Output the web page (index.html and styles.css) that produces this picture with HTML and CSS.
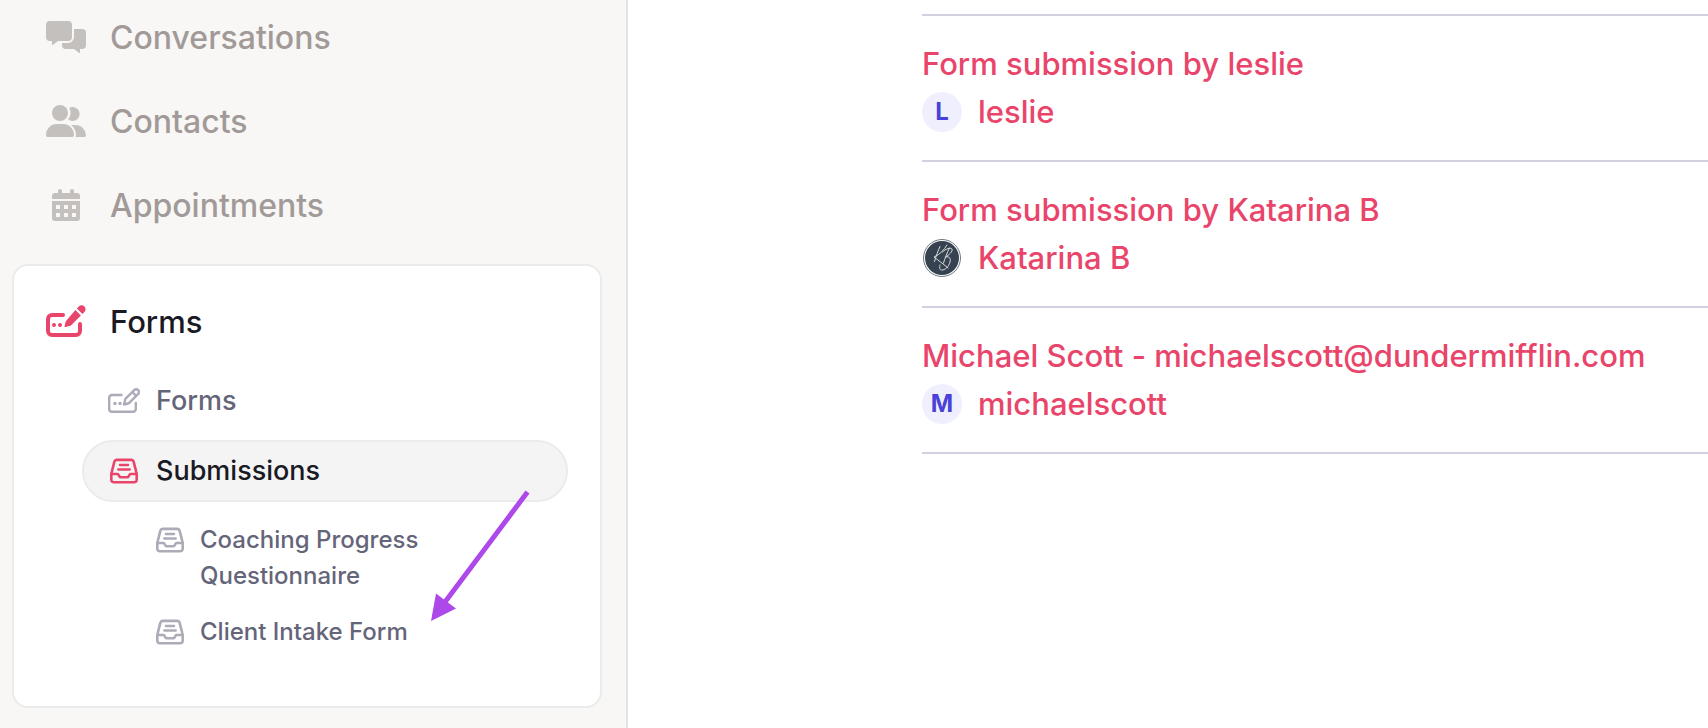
FILE: index.html
```html
<!DOCTYPE html>
<html lang="en">
<head>
<meta charset="utf-8">
<meta name="viewport" content="width=device-width, initial-scale=1">
<title>Submissions</title>
<link rel="stylesheet" href="styles.css">
</head>
<body>
<svg class="symbols" aria-hidden="true">
  <symbol id="inbox" viewBox="0 0 28 28">
    <g fill="none" stroke="currentColor" stroke-width="2.6" stroke-linecap="round" stroke-linejoin="round">
      <path d="M6.600 2.900h14.800a2.300 2.300 0 0 1 2.200 1.700l2.700 10.500c.3.900.4 1.600.4 2.500v5.100a2.500 2.500 0 0 1-2.500 2.500H3.800a2.500 2.500 0 0 1-2.500-2.500v-5.100c0-.9.1-1.600.4-2.500L4.400 4.600a2.300 2.300 0 0 1 2.200-1.700z"/>
      <path d="M1.700 17h5.500c.6 0 1 .3 1.300.8l.9 1.500c.3.600.8.900 1.400.900h6.400c.6 0 1.100-.3 1.400-.9l.9-1.500c.3-.5.7-.8 1.300-.8h5.500"/>
      <path d="M9.900 8h8.200M8.200 12.500h11.600" stroke-width="2.300"/>
    </g>
  </symbol>
</svg>
<div class="app">
  <aside class="sidebar">
    <nav class="nav">
      <a class="nav-item" href="#">
        <svg class="icon-lg" viewBox="0 0 40 40" fill="currentColor" aria-hidden="true">
          <path d="M4 3h18a4 4 0 0 1 4 4v12a4 4 0 0 1-4 4H12l-5.200 4a.5.5 0 0 1-.8-.4V23H4a4 4 0 0 1-4-4V7a4 4 0 0 1 4-4z"/>
          <path d="M28 11h8a4 4 0 0 1 4 4v12a4 4 0 0 1-4 4h-2v3.600a.5.5 0 0 1-.8.4L28 31h-8a4 4 0 0 1-4-4v-2h6a6 6 0 0 0 6-6z"/>
        </svg>
        <span>Conversations</span>
      </a>
      <a class="nav-item" href="#">
        <svg class="icon-lg" viewBox="0 0 40 40" fill="currentColor" aria-hidden="true">
          <circle cx="14" cy="11" r="8"/>
          <path d="M23.200 5.900A7 7 0 1 1 22 17.200a10 10 0 0 0 1.200-11.300z"/>
          <path d="M11 22h6a11 11 0 0 1 11 11.300c0 1-.8 1.700-1.700 1.700H1.700A1.700 1.700 0 0 1 0 33.300 11 11 0 0 1 11 22z"/>
          <path d="M25.200 23h4.200A10.600 10.600 0 0 1 40 33.600c0 .8-.6 1.400-1.400 1.400h-9c.3-.5.4-1.100.4-1.700 0-4.200-1.900-7.900-4.800-10.300z"/>
        </svg>
        <span>Contacts</span>
      </a>
      <a class="nav-item" href="#">
        <svg class="icon-lg" viewBox="0 0 40 40" fill="currentColor" aria-hidden="true">
          <path d="M12 7V5a2 2 0 0 1 4 0v2h8V5a2 2 0 0 1 4 0v2h3a3 3 0 0 1 3 3v3H6v-3a3 3 0 0 1 3-3z"/>
          <path fill-rule="evenodd" d="M6 15h28v17a3 3 0 0 1-3 3H9a3 3 0 0 1-3-3zM10 19v4h4v-4zM18 19v4h4v-4zM26 19v4h4v-4zM10 27v4h4v-4zM18 27v4h4v-4zM26 27v4h4v-4z"/>
        </svg>
        <span>Appointments</span>
      </a>
    </nav>

    <section class="card">
      <a class="card-title" href="#">
        <svg class="icon-lg" viewBox="0 0 40 40" aria-hidden="true">
          <path d="M17 13H6a4 4 0 0 0-4 4v12a4 4 0 0 0 4 4h24a4 4 0 0 0 4-4V22" fill="none" stroke="currentColor" stroke-width="4" stroke-linecap="round"/>
          <g fill="currentColor">
            <circle cx="8" cy="23" r="2"/><circle cx="14" cy="23" r="2"/>
            <path d="M29.400 7.900l5.500 5.500-9.500 9.500c-.6.600-1.300 1-2.100 1.200l-3.700.9a.8.8 0 0 1-1-1l.9-3.700c.2-.8.6-1.500 1.200-2.100z"/>
            <path d="M30.900 6.400l1.900-1.900a3.800 3.800 0 0 1 5.600 0 3.800 3.800 0 0 1 0 5.500L36.400 11.900z"/>
          </g>
        </svg>
        <span>Forms</span>
      </a>
      <div class="sub">
        <a class="sub-item" href="#">
          <svg class="icon-md" viewBox="0 0 32 32" aria-hidden="true">
            <g fill="none" stroke="currentColor" stroke-width="2.4" stroke-linecap="round" stroke-linejoin="round">
              <path d="M13.500 10H4a2.800 2.800 0 0 0-2.800 3v11A2.800 2.800 0 0 0 4 26.800h21a2.800 2.800 0 0 0 2.800-2.800v-6"/>
              <path d="M17.600 13.700L26.500 4.800a2.800 2.800 0 0 1 3.900 3.900l-8.900 9a3 3 0 0 1-1.500.8l-4 1 1-4.200c.1-.6.300-1.100.6-1.600zM24.300 7l3.900 3.900"/>
            </g>
            <circle cx="7" cy="18.500" r="1.700" fill="currentColor"/><circle cx="12" cy="18.500" r="1.700" fill="currentColor"/>
          </svg>
          <span>Forms</span>
        </a>
        <a class="sub-item active" href="#">
          <svg class="icon-md inset" aria-hidden="true"><use href="#inbox"/></svg>
          <span>Submissions</span>
        </a>
        <div class="leaves">
          <a class="leaf" href="#"><svg class="icon-sm" aria-hidden="true"><use href="#inbox"/></svg><span>Coaching Progress Questionnaire</span></a>
          <a class="leaf" href="#"><svg class="icon-sm" aria-hidden="true"><use href="#inbox"/></svg><span>Client Intake Form</span></a>
        </div>
      </div>
      <svg class="pointer" viewBox="0 0 100 132" aria-hidden="true">
        <path d="M96.500 2L14 112" stroke="currentColor" stroke-width="5" fill="none"/>
        <path d="M0 131L5 103.500 25 118.500z" fill="currentColor"/>
      </svg>
    </section>
  </aside>

  <main class="main">
    <ul class="list">
      <li class="row">
        <a href="#">Form submission by leslie</a>
        <a class="person" href="#"><span class="avatar">L</span>leslie</a>
      </li>
      <li class="row">
        <a href="#">Form submission by Katarina B</a>
        <a class="person" href="#">
          <svg class="photo" viewBox="0 0 40 40" aria-hidden="true">
            <circle cx="20" cy="20" r="18.500" fill="#fff" stroke="#6f7983" stroke-width="1"/>
            <circle cx="20" cy="20" r="17" fill="#36424f"/>
            <g fill="none" stroke="#d9dcde" stroke-width="1" stroke-linecap="round" stroke-linejoin="round">
              <path d="M18 8.500C16 13 14 18 12.500 23.500M25 7c-3 5-7 9.500-13 12 4 3 8 6 14 11"/>
              <path d="M27.500 10C25 15 23 20 21.500 25M20.500 14c3-3 8-5 9.500-3 1 2.500-3 6-6.500 8 4-1 5.500 1.500 4.500 5-1.200 4.500-5 8.500-8.500 8-2.500-.5-2-3-1.500-5"/>
            </g>
          </svg>Katarina B</a>
      </li>
      <li class="row">
        <a href="#">Michael Scott - michaelscott@dundermifflin.com</a>
        <a class="person" href="#"><span class="avatar">M</span>michaelscott</a>
      </li>
    </ul>
  </main>
</div>
</body>
</html>
```
FILE: styles.css
```css
* { box-sizing: border-box; }

body {
  margin: 0;
  background: #fff;
  font-family: Inter, "Liberation Sans", sans-serif;
  font-size: 31px;
  font-weight: 500;
  line-height: 48px;
}

a { color: inherit; text-decoration: none; }
svg { display: block; flex: none; }

.symbols { position: absolute; width: 0; height: 0; }

.app {
  display: grid;
  grid-template-columns: 628px minmax(0, 1fr);
  min-height: 100vh;
}

.sidebar {
  padding: 14px 24px 20px 12px;
  background: #f8f7f5;
  border-right: 2px solid #e3e3e3;
}

.nav {
  display: flex;
  flex-direction: column;
  gap: 36px;
  padding: 0 34px;
  margin-bottom: 34px;
  color: #a19a98;
  font-size: 32px;
}

.nav-item, .card-title {
  display: flex;
  align-items: center;
  gap: 24px;
}

.nav-item svg { color: #c4c0be; }

.icon-lg { width: 40px; height: 40px; }
.icon-md { width: 32px; height: 32px; }
.icon-sm { width: 28px; height: 28px; }
.inset { padding: 2px; }

.card {
  position: relative;
  padding: 32px 32px 56px;
  background: #fff;
  border: 2px solid #ebebeb;
  border-radius: 16px;
}

.card-title { color: #1a1a24; }
.card-title svg { color: #e9456b; }

.sub {
  display: flex;
  flex-direction: column;
  gap: 8px;
  padding-left: 36px;
  margin-top: 24px;
  color: #65657a;
  font-size: 27px;
}

.sub-item {
  display: flex;
  align-items: center;
  gap: 16px;
  padding: 5px 24px;
  border: 2px solid transparent;
  border-radius: 31px;
}

.sub-item svg, .leaf svg { color: #acacb8; }

.sub-item.active {
  color: #1a1a24;
  background: #f4f4f4;
  border-color: #ebebeb;
}

.sub-item.active svg { color: #e9456b; }

.leaves {
  display: flex;
  flex-direction: column;
  gap: 20px;
  padding: 12px 120px 0 74px;
  font-size: 24px;
  line-height: 36px;
}

.leaf {
  display: flex;
  align-items: flex-start;
  gap: 16px;
}

.leaf svg { margin-top: 4px; }

/* Arrow laid over the menu */
.pointer {
  position: absolute;
  top: 224px;
  left: 417px;
  width: 100px;
  height: 132px;
  color: #ad49ea;
}

.main { padding: 14px 0 0 294px; }

.list {
  margin: 0;
  padding: 0;
  list-style: none;
  border-top: 2px solid #d3d1df;
  color: #e9456b;
}

.row {
  display: flex;
  flex-direction: column;
  align-items: flex-start;
  padding: 24px 0;
  border-bottom: 2px solid #d3d1df;
}

.person {
  display: flex;
  align-items: center;
  gap: 16px;
}

.avatar {
  display: flex;
  align-items: center;
  justify-content: center;
  width: 40px;
  height: 40px;
  border-radius: 50%;
  background: #f0effe;
  color: #4a42d8;
  font-size: 24px;
  font-weight: 700;
}

.photo { width: 40px; height: 40px; }
```
